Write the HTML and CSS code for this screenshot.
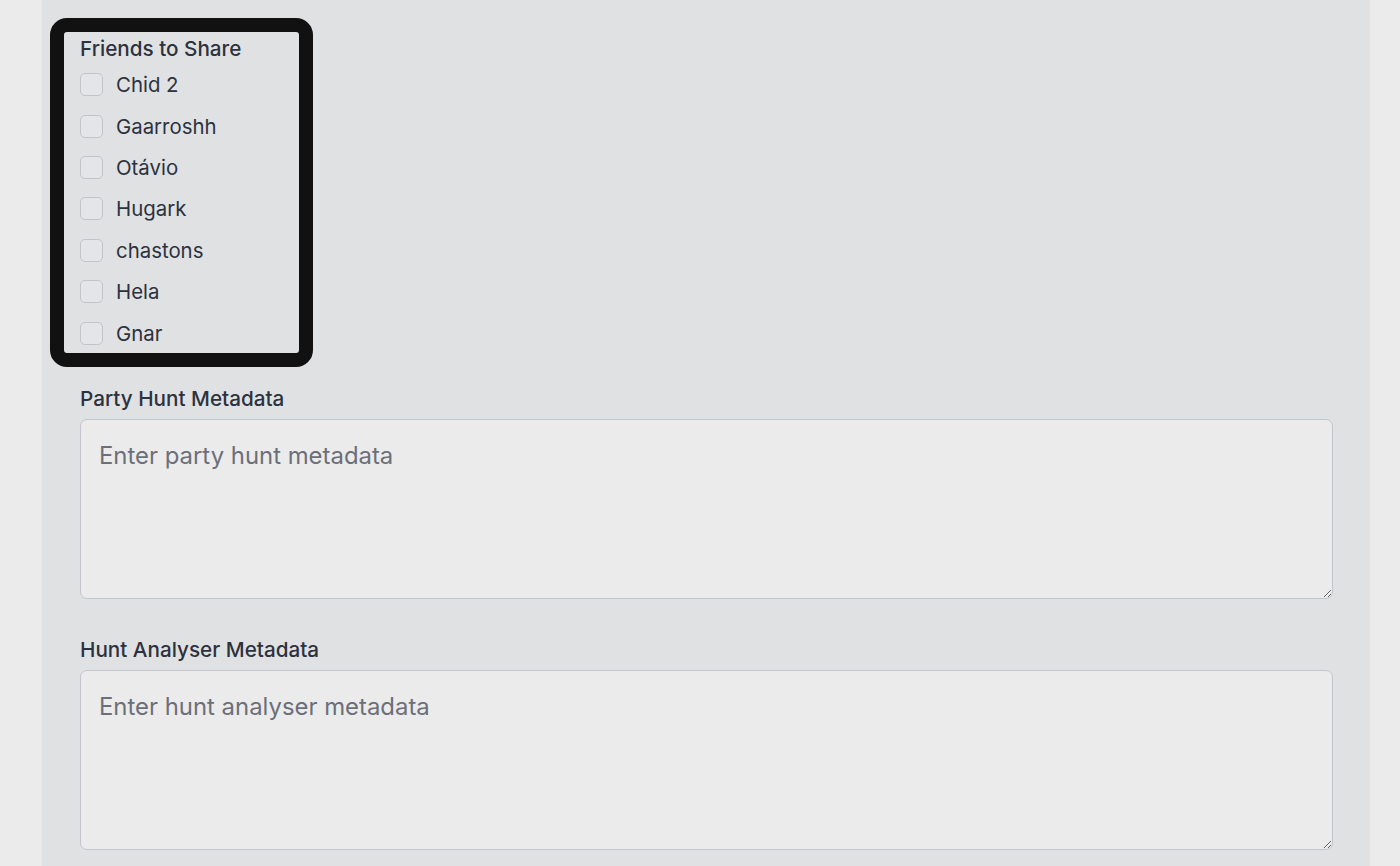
FILE: index.html
```html
<!DOCTYPE html>
<html lang="en">
<head>
<meta charset="utf-8">
<title>Share Hunt</title>
<link rel="stylesheet" href="styles.css">
</head>
<body>
<div class="page">
  <main class="panel">
    <fieldset class="friends">
      <legend class="friends-title">Friends to Share</legend>
      <label class="friend"><span class="box"></span><span>Chid 2</span></label>
      <label class="friend"><span class="box"></span><span>Gaarroshh</span></label>
      <label class="friend"><span class="box"></span><span>Otávio</span></label>
      <label class="friend"><span class="box"></span><span>Hugark</span></label>
      <label class="friend"><span class="box"></span><span>chastons</span></label>
      <label class="friend"><span class="box"></span><span>Hela</span></label>
      <label class="friend"><span class="box"></span><span>Gnar</span></label>
    </fieldset>
    <div class="field">
      <label class="field-label">Party Hunt Metadata</label>
      <textarea class="area" placeholder="Enter party hunt metadata"></textarea>
    </div>
    <div class="field">
      <label class="field-label">Hunt Analyser Metadata</label>
      <textarea class="area" placeholder="Enter hunt analyser metadata"></textarea>
    </div>
  </main>
</div>
</body>
</html>
```
FILE: styles.css
```css
* { box-sizing: border-box; }
html, body { margin: 0; height: 100%; }
body {
  background: #ebebeb;
  font-family: Inter, "Noto Sans", sans-serif;
  color: #2c323e;
  overflow: hidden;
}
.page {
  padding: 0 30px 0 42px;
}
.panel {
  background: #e0e1e3;
  min-height: 866px;
  padding: 18px 37px 0 38px;
  display: flex;
  flex-direction: column;
}
.friends {
  margin: 0 0 0 -30px;
  width: 263px;
  border: 14px solid #111111;
  border-radius: 17px;
  padding: 2px 16px 0 16px;
  display: flex;
  flex-direction: column;
  height: 349px;
}
.friends-title {
  float: left;
  padding: 0;
  font-size: 20.7px;
  font-weight: 500;
  line-height: 30px;
  margin: 0;
}
.friend {
  display: flex;
  align-items: center;
  gap: 13px;
  height: 41.4px;
  font-size: 20.4px;
  flex-shrink: 0;
}
.box {
  width: 23px;
  height: 23px;
  border: 1.5px solid #c2c4c9;
  border-radius: 5px;
  background: #e4e5e7;
}
.field {
  display: flex;
  flex-direction: column;
  margin-top: 18px;
}
.field + .field { margin-top: 37px; }
.field-label {
  font-size: 20.7px;
  font-weight: 500;
  line-height: 28px;
  margin-bottom: 6px;
}
.area {
  height: 180px;
  width: 100%;
  background: #ebebeb;
  border: 1.5px solid #c2c5cb;
  border-radius: 7px;
  padding: 21px 18px 19px;
  font-family: Inter, "Noto Sans", sans-serif;
  font-size: 23.9px;
  color: #2c323e;
  resize: vertical;
}
.area::placeholder { color: #6b6f79; }
```
